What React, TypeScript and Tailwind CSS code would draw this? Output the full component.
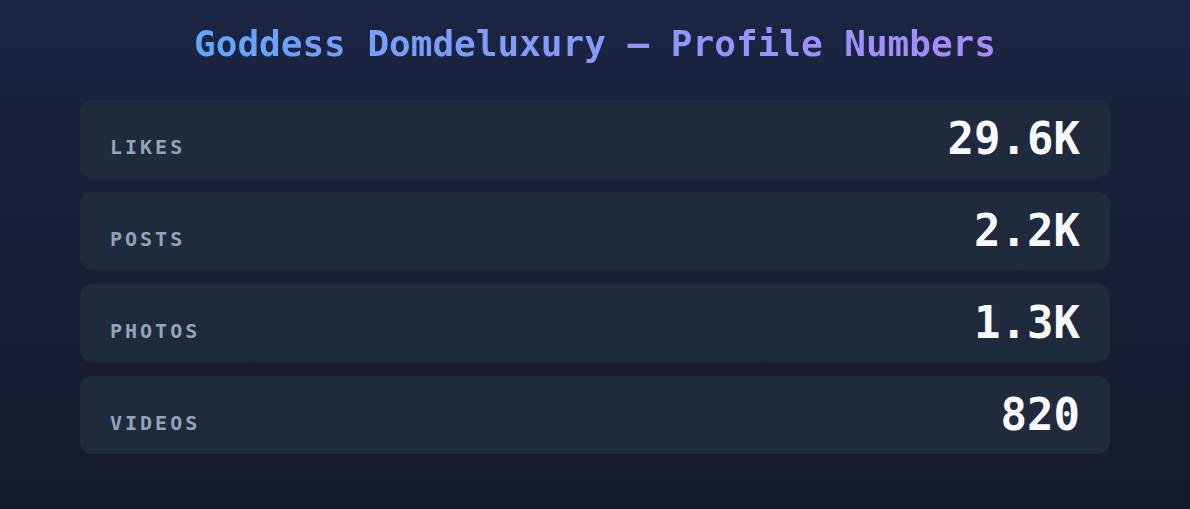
const stats = [
  { label: "Likes", value: "29.6K" },
  { label: "Posts", value: "2.2K" },
  { label: "Photos", value: "1.3K" },
  { label: "Videos", value: "820" },
];

export default function App() {
  return (
    <div
      className="min-h-[509px] w-full bg-gradient-to-b from-[#1b2442] to-[#151b2d] px-20 pt-[24px] pb-12"
      style={{ fontFamily: '"DejaVu Sans Mono", "Liberation Mono", monospace' }}
    >
      <h1 className="mb-[36px] text-center text-[36px] font-bold leading-[40px]">
        <span className="bg-gradient-to-r from-[#60a5fa] to-[#a78bfa] bg-clip-text text-transparent">
          Goddess Domdeluxury — Profile Numbers
        </span>
      </h1>
      <div className="flex flex-col gap-[14px]">
        {stats.map((s) => (
          <div
            key={s.label}
            className="flex items-baseline justify-between rounded-xl bg-[#1f2a3c] py-4 pl-[30px] pr-[30px]"
          >
            <span className="text-[20px] font-bold uppercase tracking-[0.15em] text-[#94a3b8]">
              {s.label}
            </span>
            <span className="text-[44px] font-bold leading-[46px] text-[#f8fafc]">
              {s.value}
            </span>
          </div>
        ))}
      </div>
    </div>
  );
}
